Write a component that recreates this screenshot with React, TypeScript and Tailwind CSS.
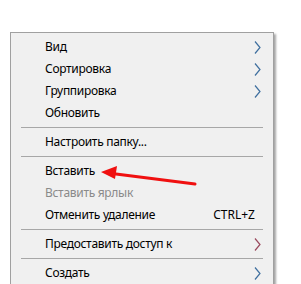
import React from "react";

type Item =
  | { type: "item"; label: string; sub?: boolean; subColor?: string; disabled?: boolean; shortcut?: string }
  | { type: "sep" };

const items: Item[] = [
  { type: "item", label: "Вид", sub: true },
  { type: "item", label: "Сортировка", sub: true },
  { type: "item", label: "Группировка", sub: true },
  { type: "item", label: "Обновить" },
  { type: "sep" },
  { type: "item", label: "Настроить папку..." },
  { type: "sep" },
  { type: "item", label: "Вставить" },
  { type: "item", label: "Вставить ярлык", disabled: true },
  { type: "item", label: "Отменить удаление", shortcut: "CTRL+Z" },
  { type: "sep" },
  { type: "item", label: "Предоставить доступ к", sub: true, subColor: "#9a4a5e" },
  { type: "sep" },
  { type: "item", label: "Создать", sub: true },
];

function Chevron({ color }: { color: string }) {
  return (
    <svg width="7" height="13" viewBox="0 0 7 13" className="block">
      <path d="M1 0.5 L6 6.5 L1 12.5" fill="none" stroke={color} strokeWidth="1.2" />
    </svg>
  );
}

export default function App() {
  return (
    <div
      className="relative w-[301px] h-[284px] overflow-hidden bg-white text-[12px] text-black"
      style={{ fontFamily: '"Noto Sans", "Open Sans", sans-serif' }}
    >
      <div className="ml-[10px] mt-[32px] w-[264px] border border-[#a0a0a0] bg-[#f0f0f0] pt-[3px] shadow-[2px_2px_2px_rgba(0,0,0,0.35)]">
        {items.map((it, i) =>
          it.type === "sep" ? (
            <div key={i} className="h-[7px] flex items-center px-[10px]">
              <div className="h-px w-full bg-[#a7a7a7]" />
            </div>
          ) : (
            <div key={i} className="h-[22px] flex items-center pl-[34px] pr-[12px]">
              <span className={"flex-1 tracking-[-0.3px] " + (it.disabled ? "text-[#8a8a8a]" : "")}>{it.label}</span>
              {it.shortcut && <span className="mr-[6px]">{it.shortcut}</span>}
              {it.sub && <Chevron color={it.subColor ?? "#3f6f9f"} />}
            </div>
          )
        )}
      </div>
      <svg className="absolute left-0 top-0" width="301" height="284" viewBox="0 0 301 284">
        <line x1="195" y1="184" x2="112" y2="173.5" stroke="#f01010" strokeWidth="3" strokeLinecap="round" />
        <polygon points="101,172 117,166 115,179" fill="#f01010" />
      </svg>
    </div>
  );
}
